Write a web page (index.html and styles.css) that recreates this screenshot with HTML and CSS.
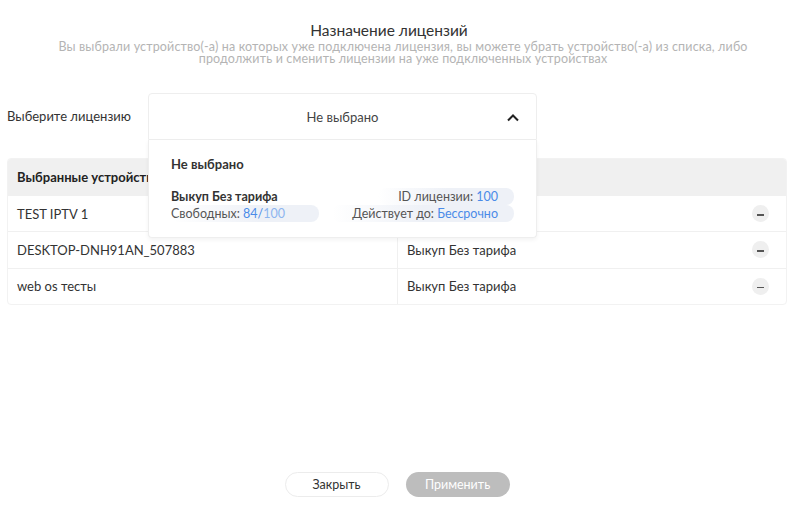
FILE: index.html
```html
<!DOCTYPE html>
<html lang="ru">
<head>
<meta charset="utf-8">
<link rel="stylesheet" href="styles.css">
</head>
<body>
<div class="page">
  <div class="head">
    <div class="title">Назначение лицензий</div>
    <div class="subtitle">Вы выбрали устройство(-а) на которых уже подключена лицензия, вы можете убрать устройство(-а) из списка, либо продолжить и сменить лицензии на уже подключенных устройствах</div>
  </div>

  <div class="license-row">
    <div class="label">Выберите лицензию</div>
    <div class="select">
      <div class="select-head">
        <span class="select-value">Не выбрано</span>
        <svg class="chevron" width="14" height="9" viewBox="0 0 14 9"><path d="M2 7.5 L7 2.5 L12 7.5" fill="none" stroke="#222" stroke-width="2"/></svg>
      </div>
      <div class="menu">
        <div class="opt-none">Не выбрано</div>
        <div class="opt">
          <div class="opt-line">
            <span class="opt-name">Выкуп Без тарифа</span>
            <span class="pill pill-r">ID лицензии: <b class="blue">100</b></span>
          </div>
          <div class="opt-line">
            <span class="pill pill-l">Свободных: <b class="blue">84/</b><b class="lblue">100</b></span>
            <span class="pill pill-r">Действует до: <b class="blue">Бессрочно</b></span>
          </div>
        </div>
      </div>
    </div>
  </div>

  <div class="table">
    <div class="thead">Выбранные устройства</div>
    <div class="trow">
      <div class="cell">TEST IPTV 1</div>
      <div class="cell cell2"><span>Выкуп Без тарифа</span><span class="minus"></span></div>
    </div>
    <div class="trow">
      <div class="cell">DESKTOP-DNH91AN_507883</div>
      <div class="cell cell2"><span>Выкуп Без тарифа</span><span class="minus"></span></div>
    </div>
    <div class="trow">
      <div class="cell">web os тесты</div>
      <div class="cell cell2"><span>Выкуп Без тарифа</span><span class="minus"></span></div>
    </div>
  </div>

  <div class="footer">
    <button class="btn btn-close">Закрыть</button>
    <button class="btn btn-apply">Применить</button>
  </div>
</div>
</body>
</html>
```
FILE: styles.css
```css
* { box-sizing: border-box; }
html, body { margin: 0; padding: 0; background: #fff; }
body {
  font-family: "Lato", "Noto Sans", sans-serif;
  color: #333;
}
.page {
  height: 511px;
  display: flex;
  flex-direction: column;
  padding: 0 13px 14px 7px;
}
.head {
  text-align: center;
  padding-top: 20px;
}
.title {
  font-size: 15.5px;
  line-height: 20px;
  color: #333;
  padding-right: 16px;
}
.subtitle {
  font-size: 12.5px;
  line-height: 12px;
  letter-spacing: 0.15px;
  color: #b4b4b4;
  margin: 1px auto 0;
  max-width: 725px;
  padding-left: 12px;
}
.license-row {
  display: flex;
  align-items: flex-start;
  margin-top: 28px;
}
.label {
  width: 141px;
  font-size: 13px;
  line-height: 47px;
  color: #333;
}
.select {
  position: relative;
  width: 389px;
}
.select-head {
  height: 47px;
  border: 1px solid #eee;
  border-radius: 4px 4px 0 0;
  display: flex;
  align-items: center;
  justify-content: center;
  position: relative;
  font-size: 13px;
  color: #444;
}
.chevron {
  position: absolute;
  right: 16px;
  top: 19px;
}
.menu {
  position: absolute;
  left: 0;
  right: 0;
  top: 47px;
  background: #fff;
  border: 1px solid #eee;
  border-top: none;
  border-radius: 0 0 4px 4px;
  box-shadow: 0 2px 4px rgba(0,0,0,0.05);
  padding: 15px 22px 15px 22px;
  z-index: 5;
}
.opt-none {
  font-size: 13px;
  font-weight: bold;
  color: #333;
  line-height: 18px;
}
.opt {
  margin-top: 15px;
}
.opt-line {
  display: flex;
  justify-content: space-between;
  align-items: center;
  font-size: 12.5px;
  line-height: 17px;
  color: #555;
}
.opt-name { font-weight: bold; color: #333; }
.pill {
  border-radius: 8px;
  padding-right: 16px;
}
.pill-l {
  width: 148px;
  background: linear-gradient(90deg, rgba(238,241,248,0) 0%, #eef1f7 60%);
}
.pill-r {
  background: linear-gradient(90deg, rgba(238,241,248,0) 0%, #eef1f7 50%);
  padding-left: 20px;
}
.blue { color: #4a8be8; font-weight: normal; }
.lblue { color: #8db5ef; font-weight: normal; }

.table {
  margin-top: 18px;
  border: 1px solid #f2f2f2;
  border-radius: 4px;
  overflow: hidden;
}
.thead {
  height: 36px;
  background: #f0f0f0;
  font-size: 13px;
  font-weight: bold;
  color: #222;
  display: flex;
  align-items: center;
  padding-left: 9px;
}
.trow {
  display: flex;
  height: 36.3px;
  border-top: 1px solid #f0f0f0;
}
.cell {
  width: 390px;
  display: flex;
  align-items: center;
  padding-left: 9px;
  font-size: 13px;
  color: #333;
  border-right: 1px solid #f0f0f0;
}
.cell2 {
  flex: 1;
  border-right: none;
  justify-content: space-between;
  padding-right: 17px;
}
.minus {
  width: 17px;
  height: 17px;
  border-radius: 50%;
  background: #efefef;
  position: relative;
}
.minus::after {
  content: "";
  position: absolute;
  left: 5px;
  top: 9px;
  width: 7px;
  height: 1.5px;
  background: #555;
}
.footer {
  margin-top: auto;
  display: flex;
  justify-content: center;
  gap: 17px;
}
.btn {
  width: 104px;
  height: 25px;
  border-radius: 13px;
  font-family: inherit;
  font-size: 12.5px;
  cursor: pointer;
}
.btn-close {
  background: #fff;
  border: 1px solid #ececec;
  color: #333;
}
.btn-apply {
  background: #bdbdbd;
  border: none;
  color: #fff;
}
```
